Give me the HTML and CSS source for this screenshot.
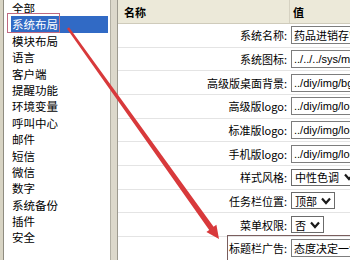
FILE: index.html
```html
<!DOCTYPE html>
<html lang="zh-CN">
<head>
    <meta charset="UTF-8">
    <meta name="viewport" content="width=device-width, initial-scale=1.0">
    <title>系统设置</title>
    <link rel="stylesheet" href="styles.css">
</head>
<body>
    <div class="window">
        <div class="edge"></div>
        <ul class="menu">
            <li>全部</li>
            <li class="active">系统布局</li>
            <li>模块布局</li>
            <li>语言</li>
            <li>客户端</li>
            <li>提醒功能</li>
            <li>环境变量</li>
            <li>呼叫中心</li>
            <li>邮件</li>
            <li>短信</li>
            <li>微信</li>
            <li>数字</li>
            <li>系统备份</li>
            <li>插件</li>
            <li>安全</li>
        </ul>
        <div class="splitter"></div>
        <div class="grid">
            <div class="row head">
                <div class="label name">名称</div>
                <div class="value">值</div>
            </div>
            <div class="row">
                <div class="label">系统名称:</div>
                <div class="value"><input class="field" type="text" value="药品进销存管理系统"></div>
            </div>
            <div class="row">
                <div class="label">系统图标:</div>
                <div class="value"><input class="field latin" type="text" value="../../../sys/midi.png"></div>
            </div>
            <div class="row">
                <div class="label">高级版桌面背景:</div>
                <div class="value"><input class="field latin" type="text" value="../diy/img/bg.jpg"></div>
            </div>
            <div class="row">
                <div class="label">高级版logo:</div>
                <div class="value"><input class="field latin" type="text" value="../diy/img/logo.png"></div>
            </div>
            <div class="row">
                <div class="label">标准版logo:</div>
                <div class="value"><input class="field latin" type="text" value="../diy/img/logo.png"></div>
            </div>
            <div class="row">
                <div class="label">手机版logo:</div>
                <div class="value"><input class="field latin" type="text" value="../diy/img/logo.png"></div>
            </div>
            <div class="row">
                <div class="label">样式风格:</div>
                <div class="value">
                    <div class="picker picker-wide"><span>中性色调</span>
                        <svg width="10" height="8" viewBox="0 0 10 8"><path d="M1 1.5 L5 6 L9 1.5" fill="none" stroke="#1a1a1a" stroke-width="2.2"/></svg>
                    </div>
                </div>
            </div>
            <div class="row">
                <div class="label">任务栏位置:</div>
                <div class="value">
                    <div class="picker"><span>顶部</span>
                        <svg width="10" height="8" viewBox="0 0 10 8"><path d="M1 1.5 L5 6 L9 1.5" fill="none" stroke="#1a1a1a" stroke-width="2.2"/></svg>
                    </div>
                </div>
            </div>
            <div class="row">
                <div class="label">菜单权限:</div>
                <div class="value">
                    <div class="picker"><span>否</span>
                        <svg width="10" height="8" viewBox="0 0 10 8"><path d="M1 1.5 L5 6 L9 1.5" fill="none" stroke="#1a1a1a" stroke-width="2.2"/></svg>
                    </div>
                </div>
            </div>
            <div class="row">
                <div class="label">标题栏广告:</div>
                <div class="value"><input class="field" type="text" value="态度决定一切"></div>
            </div>
        </div>

        <!-- annotations drawn over the screenshot -->
        <div class="mark mark-menu"></div>
        <div class="mark mark-field"></div>
        <svg class="arrow" width="350" height="260" viewBox="0 0 350 260">
            <polygon points="67,28.7 209.2,230 206.4,232 219,239 216.4,224.8 213.6,226.8 69,27.3" fill="#d8393b"/>
        </svg>
    </div>
</body>
</html>
```

FILE: styles.css
```css
body {
    margin: 0;
    font-family: "Noto Sans CJK SC", sans-serif;
    font-size: 11px;
    color: #000;
}
.window {
    position: relative;
    display: flex;
    width: 350px;
    height: 260px;
    overflow: hidden;
    background-color: #fff;
}
.edge {
    width: 3px;
    background-color: #d8d4c4;
    border-right: 1px solid #8f8c80;
}
.menu {
    list-style: none;
    margin: 0;
    padding: 0;
    width: 106px;
    flex-shrink: 0;
    background-color: #fff;
    font-size: 11.5px;
}
.menu li {
    height: 16.4px;
    line-height: 16.4px;
    margin: 0 2px 0 7px;
    padding-left: 1px;
    white-space: nowrap;
}
.menu li.active {
    background-color: #316ac5;
    color: #fff;
}
.splitter {
    width: 6px;
    flex-shrink: 0;
    background-color: #dcd8cb;
    border-left: 1px solid #b3b0a4;
    border-right: 1px solid #9c998e;
}
.grid {
    flex: 1;
    min-width: 0;
}
.row {
    display: flex;
    align-items: center;
    height: 23.67px;
    border-bottom: 1px solid #e4e4e4;
    box-sizing: border-box;
}
.head {
    height: 24px;
    background-color: #ece9d9;
    border-bottom: 1px solid #cfcbbb;
    font-weight: bold;
}
.label {
    width: 172px;
    flex-shrink: 0;
    text-align: right;
    padding-right: 3px;
    box-sizing: border-box;
    white-space: nowrap;
}
.head .name {
    text-align: left;
    padding-left: 6px;
    border-right: 1px solid #d6d2c2;
    height: 100%;
    line-height: 24px;
}
.head .value {
    padding-left: 3px;
}
.value {
    flex: 1;
    min-width: 0;
    white-space: nowrap;
    padding-left: 1px;
    display: flex;
    align-items: center;
}
.field {
    width: 90px;
    height: 18px;
    flex-shrink: 0;
    box-sizing: border-box;
    border: 1px solid #7d7d7d;
    padding: 0 2px;
    margin: 0;
    font-family: "Noto Sans CJK SC", sans-serif;
    font-size: 11px;
    color: #000;
    background-color: #fff;
}
.field.latin {
    font-family: "Liberation Sans", "Noto Sans CJK SC", sans-serif;
}
.picker {
    display: inline-flex;
    align-items: center;
    gap: 4px;
    height: 17px;
    flex-shrink: 0;
    box-sizing: border-box;
    border: 1px solid #6b6b6b;
    padding: 0 3px;
    background-color: #fff;
}
.picker-wide {
    width: 70px;
    gap: 5px;
}
.mark {
    position: absolute;
    box-sizing: border-box;
}
.mark-menu {
    left: 7px;
    top: 13px;
    width: 53px;
    height: 20px;
    border: 1px solid #bf6a80;
}
.mark-field {
    left: 227px;
    top: 235px;
    width: 130px;
    height: 30px;
    border: 1px solid #7a5e5e;
}
.arrow {
    position: absolute;
    left: 0;
    top: 0;
    pointer-events: none;
}
```
